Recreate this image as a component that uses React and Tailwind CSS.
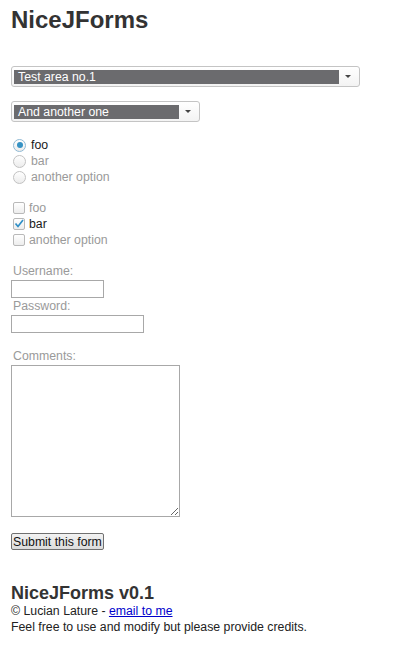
const font = { fontFamily: '"Liberation Sans", Arial, sans-serif' }

function FakeSelect({ label, width, barWidth }) {
  return (
    <div
      className={`flex items-center h-[21px] rounded-[3px] border border-[#c4c4c4] bg-gradient-to-b from-white to-[#f3f3f3] pl-[2px] pr-[2px] ${width}`}
    >
      <div className={`h-[14px] bg-[#6b6b6e] text-white text-[12.3px] leading-[14px] pl-[4px] ${barWidth}`}>{label}</div>
      <div className="flex-1 flex items-center justify-center">
        <svg width="6" height="3" viewBox="0 0 6 3">
          <path d="M0 0h6L3 3z" fill="#444" />
        </svg>
      </div>
    </div>
  )
}

function Radio({ checked, children }) {
  return (
    <div className="flex items-center h-[16px] gap-[5px]">
      <span
        className={`w-[13px] h-[13px] rounded-full border flex items-center justify-center bg-gradient-to-b from-white to-[#ececec] ${
          checked ? 'border-[#8fb9d4]' : 'border-[#c2c2c2]'
        }`}
      >
        {checked && <span className="w-[6px] h-[6px] rounded-full bg-[#3592c4]" />}
      </span>
      <span className={`text-[12.3px] ${checked ? 'text-[#1a1a1a]' : 'text-[#9a9a9a]'}`}>{children}</span>
    </div>
  )
}

function Check({ checked, children }) {
  return (
    <div className="flex items-center h-[16px] gap-[4px]">
      <span className="w-[12px] h-[12px] rounded-[2px] border border-[#b9b9b9] bg-gradient-to-b from-white to-[#ededed] flex items-center justify-center">
        {checked && (
          <svg width="10" height="9" viewBox="0 0 10 9" className="-mt-[1px]">
            <path d="M1.5 4.5L4 7.5L9 1" fill="none" stroke="#2f8fc6" strokeWidth="1.7" />
          </svg>
        )}
      </span>
      <span className={`text-[12.3px] ${checked ? 'text-[#1a1a1a]' : 'text-[#9a9a9a]'}`}>{children}</span>
    </div>
  )
}

export default function App() {
  return (
    <div className="bg-white min-h-[645px] pl-[11px] text-[12.3px]" style={font}>
      {/* Header */}
      <h1 className="pt-[8px] text-[24px] leading-[24px] font-bold text-[#333]">NiceJForms</h1>

      {/* Selects */}
      <div className="mt-[34px]">
        <FakeSelect label="Test area no.1" width="w-[349px]" barWidth="w-[325px]" />
      </div>
      <div className="mt-[14px]">
        <FakeSelect label="And another one" width="w-[189px]" barWidth="w-[165px]" />
      </div>

      {/* Radios */}
      <div className="mt-[15px] pl-[2px]">
        <Radio checked>foo</Radio>
        <Radio>bar</Radio>
        <Radio>another option</Radio>
      </div>

      {/* Checkboxes */}
      <div className="mt-[15px] pl-[2px]">
        <Check>foo</Check>
        <Check checked>bar</Check>
        <Check>another option</Check>
      </div>

      {/* Text inputs */}
      <div className="mt-[15px]">
        <div className="text-[#9a9a9a] pl-[2px] h-[16px] leading-[16px]">Username:</div>
        <div className="mt-[1px] w-[93px] h-[18px] border border-[#a8a8a8]" />
        <div className="text-[#9a9a9a] pl-[2px] h-[16px] leading-[16px]">Password:</div>
        <div className="mt-[1px] w-[133px] h-[18px] border border-[#a8a8a8]" />
      </div>

      <div className="mt-[15px]">
        <div className="text-[#9a9a9a] pl-[2px] h-[16px] leading-[16px]">Comments:</div>
        <textarea className="block mt-[1px] w-[169px] h-[152px] border border-[#a8a8a8] resize outline-none" />
      </div>

      <button className="mt-[16px] h-[17px] px-[1px] rounded-[2px] border border-[#707070] bg-gradient-to-b from-[#f2f2f2] to-[#dcdcdc] text-[12.3px] leading-[14px] text-[#111]">
        Submit this form
      </button>

      {/* Footer */}
      <div className="mt-[32px]">
        <div className="text-[18px] leading-[20px] font-bold text-[#333]">NiceJForms v0.1</div>
        <div className="leading-[16px] text-[#222]">
          © Lucian Lature - <a href="#" className="text-[#0000cc] underline">email to me</a>
        </div>
        <div className="leading-[16px] text-[#222]">Feel free to use and modify but please provide credits.</div>
      </div>
    </div>
  )
}
